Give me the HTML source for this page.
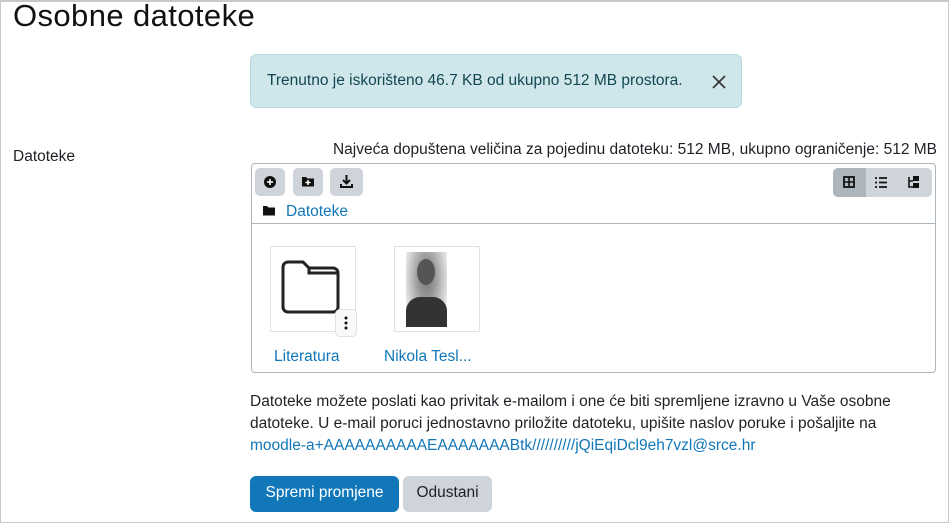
<!DOCTYPE html>
<html><head><meta charset="utf-8"><style>
*{box-sizing:border-box}
body{margin:0;width:949px;height:523px;overflow:hidden;background:#fff;font-family:"Liberation Sans",sans-serif;color:#1d2125}
.frame{position:absolute;left:0;top:0;width:949px;height:523px;border:1px solid #c8c8c8;border-top:2px solid #c8c8c8}
.a{position:absolute;white-space:nowrap}
h1{position:absolute;left:13px;top:-2px;margin:0;font-weight:400;font-size:31px;letter-spacing:0.4px;color:#111}
.alert{position:absolute;left:250px;top:54px;width:492px;height:54px;background:#cfe6ea;border:1px solid #b8dbe1;border-radius:6px;color:#124851;font-size:15.5px;padding:17px 0 0 16px}
.fm{position:absolute;left:251px;top:163px;width:685px;height:210px;border:1px solid #adb5bd;border-radius:4px}
.btn{position:absolute;top:4px;width:34px;height:28px;background:#ced4da;border-radius:5px}
.grp{position:absolute;left:581px;top:4px;width:99px;height:29px;background:#ced4da;border-radius:5px;overflow:hidden}
.tile{position:absolute;top:82px;width:86px;height:86px;border:1px solid #dee2e6;background:#fff}
.link{color:#1177b8;font-size:15.5px}
p{position:absolute;left:250px;top:391px;margin:0;width:700px;font-size:15.5px;line-height:22px;white-space:nowrap}
.b{position:absolute;top:476px;height:36px;border-radius:6px;font-size:15.5px;padding-top:8px;text-align:center}
</style></head><body>
<div class="frame"></div>
<h1>Osobne datoteke</h1>
<div class="alert">Trenutno je iskorišteno 46.7 KB od ukupno 512 MB prostora.
<svg style="position:absolute;left:460px;top:19px" width="16" height="16" viewBox="0 0 16 16"><path d="M2 2L14 14M14 2L2 14" stroke="#333" stroke-width="1.6"/></svg></div>
<div class="a" style="left:13px;top:148px;font-size:15.5px">Datoteke</div>
<div class="a" style="right:12px;top:141px;font-size:15.5px">Najveća dopuštena veličina za pojedinu datoteku: 512 MB, ukupno ograničenje: 512 MB</div>
<div class="fm">
 <div class="btn" style="left:3px;width:30px"><svg width="30" height="28"><circle cx="15" cy="14" r="6" fill="#111"/><path d="M15 11v6M12 14h6" stroke="#fff" stroke-width="1.5"/></svg></div>
 <div class="btn" style="left:41px;width:30px"><svg width="30" height="28"><path d="M9 9h4l1.5 1.5H21v8H9z" fill="#111"/><path d="M15 12v5M12.5 14.5h5" stroke="#fff" stroke-width="1.5"/></svg></div>
 <div class="btn" style="left:78px;width:33px"><svg width="33" height="28"><path d="M16.5 7v8M13 12l3.5 3.5L20 12" stroke="#111" stroke-width="2" fill="none"/><path d="M11 16v3h11v-3" stroke="#111" stroke-width="2" fill="none"/></svg></div>
 <div class="grp"><div style="position:absolute;left:0;top:0;width:33px;height:29px;background:#adb5bd"></div>
 <svg width="99" height="29" style="position:absolute;left:0;top:0"><rect x="11" y="9" width="10" height="10" fill="none" stroke="#111" stroke-width="1.8"/><path d="M16 9v10M11 14h10" stroke="#111" stroke-width="1.6"/>
 <path d="M42 10h2M42 14.5h2M42 19h2M46 10h8M46 14.5h8M46 19h8" stroke="#111" stroke-width="1.8"/>
 <path d="M76 9v10h4M76 13h4" stroke="#111" stroke-width="1.6" fill="none"/><rect x="80" y="8" width="6" height="5" fill="#111"/><rect x="80" y="15" width="6" height="5" fill="#111"/></svg></div>
 <svg style="position:absolute;left:10px;top:40px" width="14" height="12"><path d="M1 2h4l1.5 1.5H13v8H1z" fill="#111"/></svg>
 <div class="a link" style="left:34px;top:39px">Datoteke</div>
 <div style="position:absolute;left:0;top:59px;width:683px;border-top:1px solid #adb5bd"></div>
 <div class="tile" style="left:18px"><svg width="86" height="86"><path d="M12 20a5 5 0 0 1 5-5h15l6 6h24a5 5 0 0 1 5 5v34a5 5 0 0 1-5 5H17a5 5 0 0 1-5-5z" fill="none" stroke="#222" stroke-width="3"/><path d="M38 21v5h29" fill="none" stroke="#222" stroke-width="3"/></svg>
 <div style="position:absolute;left:64px;top:62px;width:22px;height:28px;background:#f8f9fa;border:1px solid #dee2e6;border-radius:5px"><svg width="20" height="26"><circle cx="10" cy="8" r="1.5" fill="#111"/><circle cx="10" cy="13" r="1.5" fill="#111"/><circle cx="10" cy="18" r="1.5" fill="#111"/></svg></div></div>
 <div class="tile" style="left:142px"><div style="position:absolute;left:11px;top:5px;width:41px;height:75px;background:radial-gradient(ellipse at 50% 35%,#777 0,#999 30%,#ccc 60%,#eee 80%);"></div>
 <div style="position:absolute;left:11px;top:50px;width:41px;height:30px;background:#333;border-radius:14px 14px 0 0"></div>
 <div style="position:absolute;left:22px;top:12px;width:18px;height:26px;background:#555;border-radius:50%"></div></div>
 <div class="a link" style="left:22px;top:184px">Literatura</div>
 <div class="a link" style="left:132px;top:184px">Nikola Tesl...</div>
</div>
<p>Datoteke možete poslati kao privitak e-mailom i one će biti spremljene izravno u Vaše osobne<br>datoteke. U e-mail poruci jednostavno priložite datoteku, upišite naslov poruke i pošaljite na<br><span class="link">moodle-a+AAAAAAAAAAEAAAAAAABtk//////////jQiEqiDcl9eh7vzl@srce.hr</span></p>
<div class="b" style="left:250px;width:149px;background:#1177b8;color:#fff">Spremi promjene</div>
<div class="b" style="left:403px;width:89px;background:#ced4da;color:#1d2125">Odustani</div>
</body></html>
